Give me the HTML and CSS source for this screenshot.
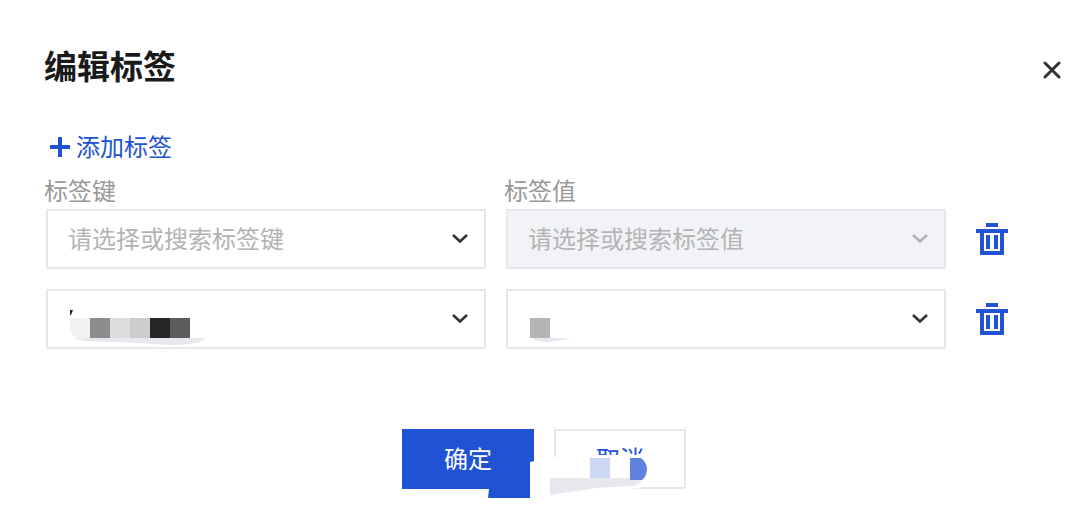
FILE: index.html
```html
<!DOCTYPE html>
<html lang="zh-CN">
<head>
    <meta charset="UTF-8">
    <meta name="viewport" content="width=device-width, initial-scale=1.0">
    <title>编辑标签</title>
    <link rel="stylesheet" href="styles.css">
</head>
<body>
    <div class="dialog">
        <div class="dialog-header">
            <h2>编辑标签</h2>
            <svg class="close-icon" width="18" height="18" viewBox="0 0 18 18">
                <path d="M2 2L16 16M16 2L2 16"/>
            </svg>
        </div>

        <a class="add-link">
            <svg width="20" height="20" viewBox="0 0 20 20">
                <path d="M8 0h4v8h8v4h-8v8H8v-8H0V8h8z"/>
            </svg>
            <span>添加标签</span>
        </a>

        <div class="tag-grid">
            <div class="tag-label">标签键</div>
            <div class="tag-label">标签值</div>
            <div></div>

            <div class="select">
                <span class="placeholder">请选择或搜索标签键</span>
                <svg class="arrow" width="18" height="12" viewBox="0 0 18 12"><path d="M2 2L9 8.5L16 2"/></svg>
            </div>
            <div class="select disabled">
                <span class="placeholder">请选择或搜索标签值</span>
                <svg class="arrow" width="18" height="12" viewBox="0 0 18 12"><path d="M2 2L9 8.5L16 2"/></svg>
            </div>
            <svg class="trash" width="32" height="32" viewBox="0 0 32 32">
                <path fill-rule="evenodd" d="M10 0h12v4H10zM0 6h32v4h-4v22H4V10H0zM8 10v18h16V10zM10 12h4v14h-4zM18 12h4v14h-4z"/>
            </svg>

            <div class="select">
                <!-- blurred value -->
                <svg class="blur-value" width="140" height="38" viewBox="68 309 140 38">
                    <path fill="#e7e8ee" d="M75 338H206Q200 345 170 345Q130 342 85 341Q78 340 75 338Z"/>
                    <path fill="#f2f2f2" d="M70 318H90V338H78Q70 336 70 326Z"/>
                    <rect x="90" y="318" width="20" height="20" fill="#8c8c8c"/>
                    <rect x="110" y="318" width="20" height="20" fill="#dddddd"/>
                    <rect x="130" y="318" width="20" height="20" fill="#cccccc"/>
                    <rect x="150" y="318" width="20" height="20" fill="#262626"/>
                    <rect x="170" y="318" width="20" height="20" fill="#5c5c5c"/>
                    <path fill="#222222" d="M70 310H73L71 315H70Z"/>
                </svg>
                <svg class="arrow" width="18" height="12" viewBox="0 0 18 12"><path d="M2 2L9 8.5L16 2"/></svg>
            </div>
            <div class="select">
                <svg class="blur-value" width="60" height="38" viewBox="528 309 60 38">
                    <path fill="#e7e8ee" d="M532 338H572Q560 341 548 342Q536 342 532 338Z"/>
                    <rect x="530" y="318" width="20" height="20" fill="#b5b5b5"/>
                </svg>
                <svg class="arrow" width="18" height="12" viewBox="0 0 18 12"><path d="M2 2L9 8.5L16 2"/></svg>
            </div>
            <svg class="trash" width="32" height="32" viewBox="0 0 32 32">
                <path fill-rule="evenodd" d="M10 0h12v4H10zM0 6h32v4h-4v22H4V10H0zM8 10v18h16V10zM10 12h4v14h-4zM18 12h4v14h-4z"/>
            </svg>
        </div>

        <div class="dialog-footer">
            <button class="btn primary"><span>确定</span></button>
            <button class="btn"><span>取消</span></button>
            <!-- smear over the buttons -->
            <svg class="smear" width="170" height="55" viewBox="484 449 170 55">
                <path fill="#ffffff" d="M530 462L554 457L594 455H648V478L640 488L550 496L530 500Z"/>
                <path fill="#2052d4" d="M489 489H530V498H488Z"/>
                <rect x="590" y="458" width="20" height="20" fill="#ccd8f4"/>
                <path fill="#6181df" d="M630 458H641Q647 463 647 469Q647 476 642 480H630Z"/>
                <path fill="#e7e8ee" d="M550 478H630V480H642Q638 486 630 486L596 488L550 495Z"/>
            </svg>
        </div>
    </div>
</body>
</html>
```

FILE: styles.css
```css
body {
    margin: 0;
    background: white;
    font-family: "Noto Sans CJK SC", "Noto Sans", sans-serif;
    font-size: 24px;
}

.dialog {
    height: 530px;
    box-sizing: border-box;
    padding: 43px 23px 0 44px;
    overflow: hidden;
}

.dialog-header {
    display: flex;
    justify-content: space-between;
    align-items: flex-start;
    margin-bottom: 42px;
}

h2 {
    margin: 0;
    font-size: 33px;
    line-height: 44px;
    font-weight: 700;
    color: #1a1a1a;
}

.close-icon {
    margin-top: 18px;
}

.close-icon path {
    fill: none;
    stroke: #333333;
    stroke-width: 3;
    stroke-linecap: round;
}

.add-link {
    display: flex;
    align-items: center;
    gap: 6px;
    height: 36px;
    padding-left: 6px;
    margin-bottom: 8px;
    color: #2052d4;
}

.add-link svg {
    fill: #2052d4;
}

.add-link span {
    margin-bottom: 4px;
}

.tag-grid {
    display: grid;
    grid-template-columns: 442px 442px 44px;
    column-gap: 18px;
    row-gap: 20px;
    align-items: center;
}

.tag-label {
    height: 36px;
    line-height: 34px;
    color: #999999;
    margin-bottom: -20px;
}

.select {
    display: flex;
    align-items: center;
    justify-content: space-between;
    height: 60px;
    margin-left: 2px;
    box-sizing: border-box;
    padding: 0 15px 0 20px;
    border: 2px solid #e7e8ed;
    background: white;
}

.select.disabled {
    background: #f2f3f7;
}

.placeholder {
    margin-bottom: 4px;
    color: #b3b3b3;
}

.arrow path {
    fill: none;
    stroke: #333333;
    stroke-width: 2.6;
}

.select.disabled .arrow path {
    stroke: #b3b3b3;
}

.blur-value {
    align-self: flex-end;
}

.trash {
    margin-left: 12px;
    fill: #2052d4;
}

.dialog-footer {
    position: relative;
    display: flex;
    justify-content: center;
    gap: 20px;
    margin-top: 80px;
    padding-right: 17px;
}

.btn {
    width: 132px;
    height: 60px;
    border: 2px solid #e7e8ed;
    background: white;
    color: #2052d4;
    font-family: inherit;
    font-size: 24px;
    padding: 0 0 4px;
}

.btn.primary {
    border: none;
    background: #2052d4;
    color: white;
}

.smear {
    position: absolute;
    left: 440px;
    top: 20px;
}
```
